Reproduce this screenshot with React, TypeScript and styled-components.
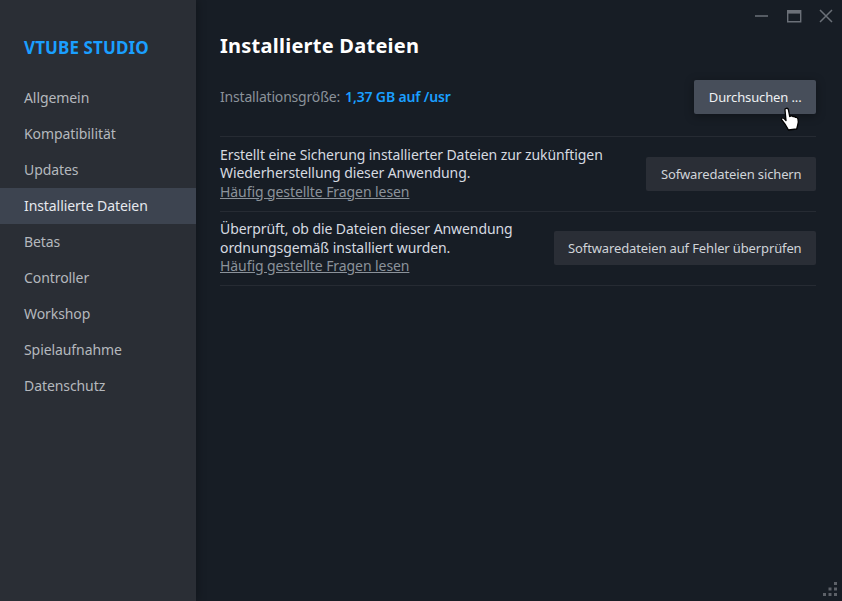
import React from "react";
import styled, { createGlobalStyle } from "styled-components";

const Global = createGlobalStyle`
  html, body { margin: 0; padding: 0; background: #171d25; overflow: hidden; }
  #root { width: 842px; height: 601px; }
  * { box-sizing: border-box; }
`;

const Page = styled.div`
  position: relative;
  width: 842px;
  height: 601px;
  display: flex;
  background: #171d25;
  font-family: "Noto Sans", "Open Sans", sans-serif;
  font-size: 14px;
  letter-spacing: -0.08px;
  overflow: hidden;
`;

const Sidebar = styled.nav`
  width: 196px;
  flex: none;
  background: #2a2e35;
  display: flex;
  flex-direction: column;
  box-shadow: 2px 0 8px rgba(0, 0, 0, 0.25);
`;

const Brand = styled.div`
  height: 80px;
  padding: 37px 24px 0;
  color: #1a9fff;
  font-size: 17px;
  line-height: 22px;
  font-weight: 700;
  letter-spacing: 0.1px;
`;

const NavItem = styled.div<{ $active?: boolean }>`
  height: 36px;
  padding: 0 24px 2px;
  display: flex;
  align-items: center;
  color: ${(p) => (p.$active ? "#e6e9ee" : "#b4b8bd")};
  background: ${(p) => (p.$active ? "#3d4450" : "transparent")};
`;

const Main = styled.main`
  flex: 1;
  display: flex;
  flex-direction: column;
  padding: 0 26px 0 24px;
`;

const Heading = styled.h1`
  margin: 31px 0 0;
  color: #ffffff;
  font-size: 20px;
  line-height: 30px;
  font-weight: 700;
  letter-spacing: 0.25px;
`;

const SizeRow = styled.div`
  margin-top: 19px;
  padding-bottom: 22px;
  display: flex;
  align-items: center;
  justify-content: space-between;
  border-bottom: 1px solid #262b33;
`;

const SizeLabel = styled.div`
  color: #8b929a;
  display: flex;
  gap: 5px;
  letter-spacing: -0.19px;
  margin-top: -1px;
`;

const SizeValue = styled.span`
  color: #1a9fff;
  font-weight: 600;
  letter-spacing: -0.15px;
`;

const Row = styled.section`
  height: 74.5px;
  display: flex;
  align-items: center;
  justify-content: space-between;
  border-bottom: 1px solid #262b33;
`;

const Description = styled.div`
  color: #d6dae0;
  line-height: 18.5px;
  margin-top: -1px;
`;

const FaqLink = styled.a`
  display: block;
  color: #8b929a;
  text-decoration: underline;
`;

const Button = styled.button<{ $hover?: boolean }>`
  height: 34px;
  padding: 0 14.5px;
  border: 0;
  border-radius: 2px;
  font-family: inherit;
  font-size: 13px;
  letter-spacing: -0.13px;
  white-space: nowrap;
  color: ${(p) => (p.$hover ? "#eef0f3" : "#d0d4d9")};
  background: ${(p) => (p.$hover ? "#474e5a" : "#2a2e36")};
  box-shadow: ${(p) => (p.$hover ? "0 2px 10px rgba(0,0,0,.35)" : "none")};
`;

const WindowControls = styled.div`
  position: absolute;
  top: 8px;
  right: 5px;
  display: flex;
  gap: 10px;
  color: #6b7078;
`;

const Control = styled.svg`
  width: 22px;
  height: 16px;
  display: block;
`;

const Cursor = styled.svg`
  position: absolute;
  left: 780px;
  top: 107px;
  width: 22px;
  height: 24px;
`;

const Grip = styled.svg`
  position: absolute;
  right: 4px;
  bottom: 4px;
  width: 16px;
  height: 15px;
`;

const items = ["Allgemein", "Kompatibilität", "Updates", "Installierte Dateien", "Betas", "Controller", "Workshop", "Spielaufnahme", "Datenschutz"];

export default function App() {
  return (
    <Page>
      <Global />
      <Sidebar>
        <Brand>VTUBE STUDIO</Brand>
        {items.map((item) => (
          <NavItem key={item} $active={item === "Installierte Dateien"}>{item}</NavItem>
        ))}
      </Sidebar>
      <Main>
        <Heading>Installierte Dateien</Heading>
        <SizeRow>
          <SizeLabel>
            Installationsgröße: <SizeValue>1,37 GB auf /usr</SizeValue>
          </SizeLabel>
          <Button $hover>Durchsuchen ...</Button>
        </SizeRow>
        <Row>
          <Description>
            Erstellt eine Sicherung installierter Dateien zur zukünftigen<br />
            Wiederherstellung dieser Anwendung.
            <FaqLink>Häufig gestellte Fragen lesen</FaqLink>
          </Description>
          <Button>Sofwaredateien sichern</Button>
        </Row>
        <Row>
          <Description>
            Überprüft, ob die Dateien dieser Anwendung<br />
            ordnungsgemäß installiert wurden.
            <FaqLink>Häufig gestellte Fragen lesen</FaqLink>
          </Description>
          <Button>Softwaredateien auf Fehler überprüfen</Button>
        </Row>
      </Main>
      <WindowControls>
        <Control viewBox="0 0 22 16"><path d="M4 8h13" stroke="currentColor" strokeWidth="1.5" /></Control>
        <Control viewBox="0 0 22 16"><path d="M4.7 2.7h13v11h-13z" fill="none" stroke="currentColor" strokeWidth="1.4" /><path d="M4 3h14v2.6H4z" fill="currentColor" /></Control>
        <Control viewBox="0 0 22 16"><path d="M5 2l12 12M17 2L5 14" stroke="currentColor" strokeWidth="1.5" /></Control>
      </WindowControls>
      <Cursor viewBox="0 0 22 24">
        <path d="M5 3c-.3-2 3-2.400 3.400-.4l1.300 6.900 1-.4c1-.3 2 0 2.400.6 1-.4 2 0 2.500.7 1-.2 2 .3 2.300 1.300.6 1.700.4 4.500-.3 6.800l-.9 3.500-8.200 1-3.500-5.800-3.200-4.200c-1-1.400.7-2.900 2-1.700l2.200 2.200Z" fill="#fff" stroke="#000" strokeWidth="1.300" strokeLinejoin="round" />
      </Cursor>
      <Grip viewBox="0 0 16 15" fill="#5d6168">
        <rect x="12" y="0" width="3" height="3" />
        <rect x="6.500" y="5.500" width="3" height="3" />
        <rect x="12" y="5.500" width="3" height="3" />
        <rect x="1" y="11" width="3" height="3" />
        <rect x="6.500" y="11" width="3" height="3" />
        <rect x="12" y="11" width="3" height="3" />
      </Grip>
    </Page>
  );
}
